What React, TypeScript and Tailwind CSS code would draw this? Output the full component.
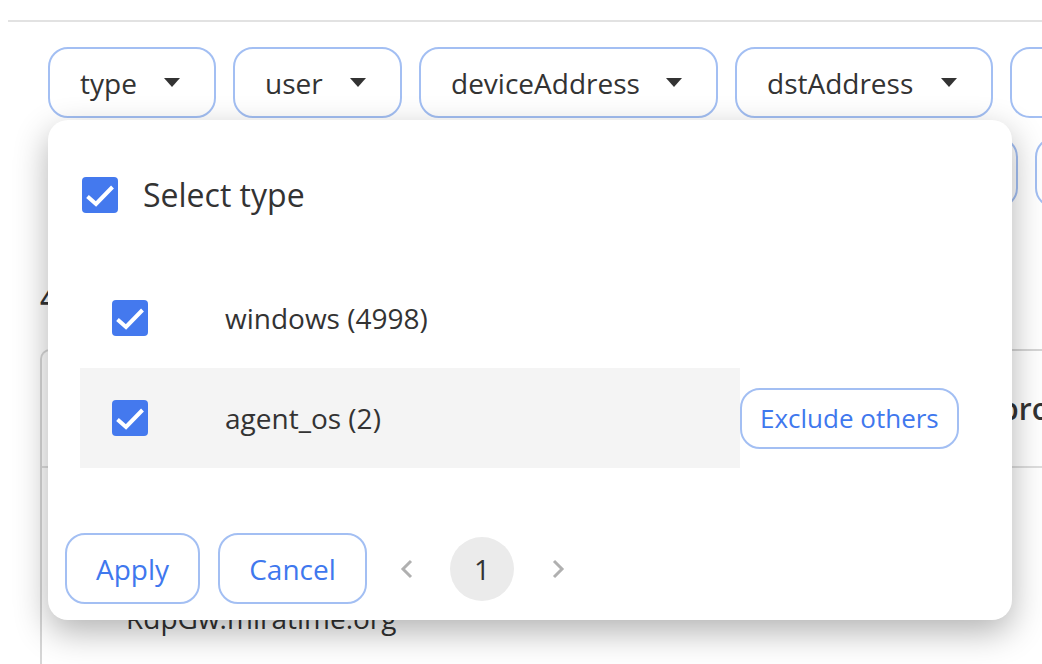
import React from "react";

const CHIP_ROW_1 = [
  { label: "type", w: "w-[168px]" },
  { label: "user", w: "w-[169px]" },
  { label: "deviceAddress", w: "w-[299px]" },
  { label: "dstAddress", w: "w-[258px]" },
  { label: "srcAddress", w: "w-[250px]" },
];

const CHIP_ROW_2 = [
  { label: "srcPort", w: "w-[200px]" },
  { label: "dstPort", w: "w-[200px]" },
  { label: "logonType", w: "w-[260px]" },
  { label: "status", w: "w-[259px]" },
  { label: "process", w: "w-[240px]" },
];

function Caret() {
  return (
    <svg viewBox="0 0 16 9" className="h-[9px] w-[16px] shrink-0">
      <path d="M0 0h16L8 9z" fill="#333" />
    </svg>
  );
}

function Chip({ label, w }: { label: string; w: string }) {
  return (
    <div
      className={`flex h-[71px] shrink-0 items-center justify-between rounded-[20px] border-2 border-[#a3bff3] bg-white pl-[30px] pr-[34px] text-[28px] ${w}`}
    >
      <span>{label}</span>
      <Caret />
    </div>
  );
}

function Checkbox() {
  return (
    <span className="flex h-[36px] w-[36px] shrink-0 items-center justify-center rounded-[4px] bg-[#4479ee]">
      <svg viewBox="0 0 36 36" className="h-[36px] w-[36px]">
        <path d="M5.5 19.5l8.5 7.5L30.5 10" stroke="white" strokeWidth="4" fill="none" />
      </svg>
    </span>
  );
}

function Chevron({ dir }: { dir: "left" | "right" }) {
  return (
    <svg viewBox="0 0 14 20" className="h-[20px] w-[14px] shrink-0">
      <path
        d={dir === "left" ? "M12 2L4 10l8 8" : "M2 2l8 8-8 8"}
        stroke="#b0b0b0"
        strokeWidth="3"
        fill="none"
      />
    </svg>
  );
}

function OptionRow({ label, hovered }: { label: string; hovered?: boolean }) {
  return (
    <div className="flex h-[100px] items-center">
      <div className={`flex h-full w-[660px] items-center pl-[32px] ${hovered ? "bg-[#f4f4f4]" : ""}`}>
        <Checkbox />
        <span className="ml-[77px] text-[28px]">{label}</span>
      </div>
      {hovered && (
        <button className="flex h-[61px] items-center rounded-[20px] border-2 border-[#a3bff3] px-[18px] text-[26px] text-[#3f78ee]">
          Exclude others
        </button>
      )}
    </div>
  );
}

export default function App() {
  return (
    <div className="relative h-[664px] w-[1042px] overflow-hidden bg-white font-['Open_Sans',sans-serif] text-[#333]">
      {/* page underneath */}
      <div className="pl-[8px] pt-[20px]">
        <div className="h-[2px] bg-[#e2e2e2]" />
      </div>
      <div className="flex gap-[17px] pl-[48px] pt-[25px]">
        {CHIP_ROW_1.map((c) => (
          <Chip key={c.label} {...c} />
        ))}
      </div>
      <div className="flex gap-[17px] pl-[48px] pt-[19px]">
        {CHIP_ROW_2.map((c) => (
          <Chip key={c.label} {...c} />
        ))}
      </div>
      <div className="mt-[72px] h-[36px] pl-[40px] text-[28px] font-semibold leading-[36px]">4,998 events</div>
      <div className="ml-[40px] mt-[33px] h-[400px] rounded-tl-[10px] border-l-2 border-t-2 border-[#d6d6d6]">
        <div className="flex h-[117px] items-center border-b-2 border-[#dedede] text-[30px] font-semibold">
          <span className="w-[250px] shrink-0 pl-[84px]">host</span>
          <span className="w-[300px] shrink-0">user</span>
          <span className="w-[408px] shrink-0">deviceAddress</span>
          <span className="shrink-0">process</span>
        </div>
        <div className="flex h-[118px] items-center text-[28px]">
          <span className="pl-[84px]">WS-0142.miratime.org</span>
        </div>
        <div className="pl-[84px] pt-[12px] text-[28px] leading-[40px]">RdpGw.miratime.org</div>
      </div>

      {/* type filter dropdown */}
      <div className="absolute left-[48px] top-[120px] flex h-[500px] w-[964px] flex-col rounded-[20px] bg-white shadow-[0_12px_34px_rgba(0,0,0,0.3)]">
        <div className="ml-[34px] mt-[57px] flex items-center gap-[25px]">
          <Checkbox />
          <span className="text-[32px] leading-[36px]">Select type</span>
        </div>
        <div className="ml-[32px] mt-[55px] flex flex-col">
          <OptionRow label="windows (4998)" />
          <OptionRow label="agent_os (2)" hovered />
        </div>
        <div className="mb-[16px] ml-[17px] mt-auto flex items-center">
          <button className="flex h-[71px] w-[135px] items-center justify-center rounded-[20px] border-2 border-[#a3bff3] text-[28px] text-[#3f78ee]">
            Apply
          </button>
          <button className="ml-[18px] flex h-[71px] w-[149px] items-center justify-center rounded-[20px] border-2 border-[#a3bff3] text-[28px] text-[#3f78ee]">
            Cancel
          </button>
          <span className="ml-[32px]">
            <Chevron dir="left" />
          </span>
          <span className="ml-[37px] flex h-[64px] w-[64px] items-center justify-center rounded-full bg-[#ebebeb] text-[28px]">
            1
          </span>
          <span className="ml-[38px]">
            <Chevron dir="right" />
          </span>
        </div>
      </div>
    </div>
  );
}
